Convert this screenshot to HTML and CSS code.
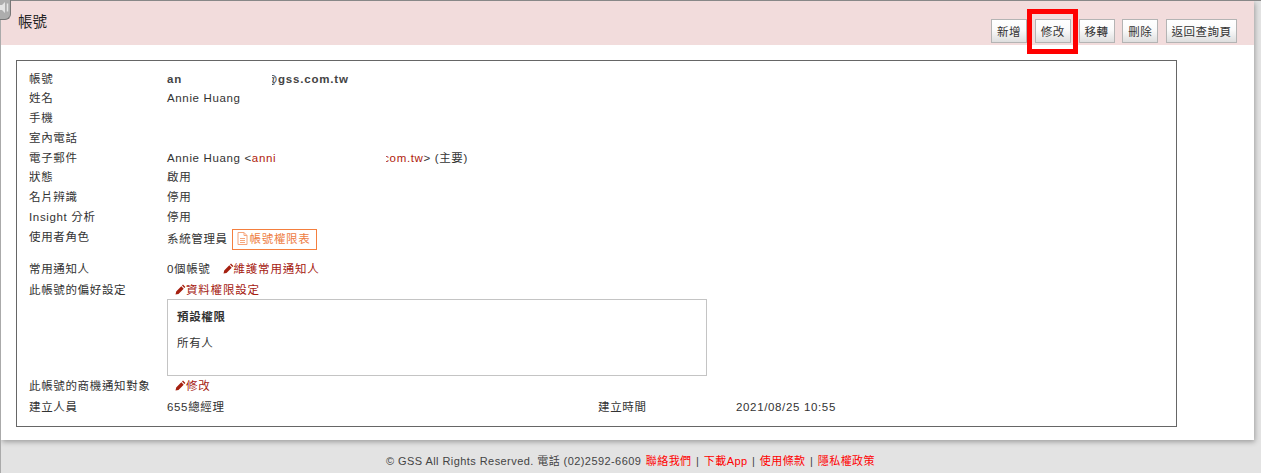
FILE: index.html
```html
<!DOCTYPE html>
<html>
  <head>
    <meta charset="utf-8">
    <title>帳號</title>
    <link rel="stylesheet" href="styles.css">
  </head>
  <body>
    <div class="handle">
      <svg width="10" height="12" viewBox="0 0 10 12"><path d="M0 3h2l3-3v11L2 8H0z" fill="#e4e4e4"/><path d="M7.5 1.5v8" stroke="#e4e4e4" stroke-width="1.5"/></svg>
    </div>
    <div class="panel">
      <div class="panel-head">
        <div class="panel-title">帳號</div>
        <div class="btn-container">
          <button>新增</button>
          <button>修改</button>
          <button>移轉</button>
          <button>刪除</button>
          <button>返回查詢頁</button>
        </div>
      </div>
      <div class="detail">
        <div class="row"><div class="label">帳號</div><div class="value strong">an<span class="mask mask-account"></span>@gss.com.tw</div></div>
        <div class="row"><div class="label">姓名</div><div class="value">Annie Huang</div></div>
        <div class="row"><div class="label">手機</div><div class="value"></div></div>
        <div class="row"><div class="label">室內電話</div><div class="value"></div></div>
        <div class="row"><div class="label">電子郵件</div><div class="value">Annie Huang &lt;<a class="mail">anni<span class="mask mask-mail"></span>com.tw</a>&gt; (主要)</div></div>
        <div class="row"><div class="label">狀態</div><div class="value">啟用</div></div>
        <div class="row"><div class="label">名片辨識</div><div class="value">停用</div></div>
        <div class="row"><div class="label">Insight 分析</div><div class="value">停用</div></div>
        <div class="row row-role">
          <div class="label">使用者角色</div>
          <div class="value">系統管理員
            <a class="perm-btn">
              <svg width="11" height="13" viewBox="0 0 11 13" fill="none" stroke="#f5a67c"><path d="M1 .5h6l3 3v9H1z"/><path d="M7 .5v3h3M3 6.5h5M3 8.5h5M3 10.5h5"/></svg>帳號權限表
            </a>
          </div>
        </div>
        <div class="row row-edit"><div class="label">常用通知人</div><div class="value">0個帳號<a class="edit edit-gap"><svg class="pencil" width="11" height="11" viewBox="0 0 11 11"><path d="M8 .6l2.4 2.4-1 1L7 1.6zM6.3 2.3l2.4 2.4-5.2 5.2-3 .7.7-3z" fill="#a52010"/></svg>維護常用通知人</a></div></div>
        <div class="row"><div class="label">此帳號的偏好設定</div><div class="value value-edit"><a class="edit"><svg class="pencil" width="11" height="11" viewBox="0 0 11 11"><path d="M8 .6l2.4 2.4-1 1L7 1.6zM6.3 2.3l2.4 2.4-5.2 5.2-3 .7.7-3z" fill="#a52010"/></svg>資料權限設定</a></div></div>
        <div class="pref-box">
          <div class="pref-title">預設權限</div>
          <div>所有人</div>
        </div>
        <div class="row"><div class="label">此帳號的商機通知對象</div><div class="value value-edit"><a class="edit"><svg class="pencil" width="11" height="11" viewBox="0 0 11 11"><path d="M8 .6l2.4 2.4-1 1L7 1.6zM6.3 2.3l2.4 2.4-5.2 5.2-3 .7.7-3z" fill="#a52010"/></svg>修改</a></div></div>
        <div class="row row-last">
          <div class="label">建立人員</div><div class="value half">655總經理</div>
          <div class="label">建立時間</div><div class="value">2021/08/25 10:55</div>
        </div>
      </div>
    </div>
    <div class="footer">© GSS All Rights Reserved. 電話 (02)2592-6609 <a>聯絡我們</a> | <a>下載App</a> | <a>使用條款</a> | <a>隱私權政策</a></div>
    <div class="red-mark"></div>
  </body>
</html>
```

FILE: styles.css
```css
body {
  font-family: "Liberation Sans", "Noto Sans CJK TC", sans-serif;
  font-size: 11.5px;
  letter-spacing: 0.65px;
  color: #333;
  background-color: #e3e3e3;
  margin: 0;
  height: 473px;
  overflow: hidden;
  border-top: 1px solid #888;
  box-sizing: border-box;
  border-left: 1px solid #aaa;
}

.handle {
  position: absolute;
  left: 0;
  top: 0;
  width: 11px;
  height: 20px;
  background-color: #adadad;
  border-right: 1px solid #777;
  border-bottom: 1px solid #777;
  border-bottom-right-radius: 6px;
  box-sizing: border-box;
  padding-top: 2px;
  overflow: hidden;
}

.panel {
  width: 1253px;
  height: 439px;
  background-color: #fff;
  box-shadow: 1px 2px 5px rgba(0, 0, 0, 0.3);
}

.panel-head {
  height: 44px;
  background-color: #f2dcdc;
  display: flex;
  justify-content: space-between;
  padding: 0 17px 0 17px;
  box-sizing: border-box;
}

.panel-title {
  font-size: 14.5px;
  letter-spacing: 0;
  color: #222;
  padding-top: 9px;
}

.btn-container {
  display: flex;
  gap: 7.75px;
  padding-top: 18px;
}

button {
  font-family: inherit;
  font-size: 11.5px;
  letter-spacing: 0.5px;
  color: #333;
  height: 24px;
  min-width: 36px;
  padding: 0 4.5px;
  border: 1px solid #b4b4b4;
  background: linear-gradient(#fff, #fafafa 45%, #dedede);
}

.detail {
  width: 1161px;
  height: 367px;
  margin: 15px 0 0 15px;
  border: 1px solid #666;
  box-sizing: border-box;
  padding: 8.5px 12px 0;
}

.row {
  display: flex;
  height: 19.8px;
  line-height: 19px;
}

.label {
  width: 138px;
  flex-shrink: 0;
}

.half {
  width: 431px;
  flex: none;
}

.row-role {
  height: 32px;
}

.row-role .value {
  line-height: 21px;
  padding-top: 1px;
}

.row-edit {
  height: 20.8px;
}

.row-last {
  margin-top: 1px;
}

.value-edit {
  padding-left: 8px;
}

.strong {
  font-weight: bold;
  letter-spacing: 0.8px;
  color: #444;
}

/* blanked part of the address, it sits over the next letter */
.mask {
  display: inline-block;
  position: relative;
  height: 14px;
  vertical-align: middle;
  background-color: #fff;
}

.mask-account {
  width: 90px;
  margin-right: -6px;
}

.mask-mail {
  width: 110px;
  margin-right: -3px;
}

.mail {
  color: #b01c0c;
}

.perm-btn {
  display: inline-block;
  border: 1px solid #f47f3e;
  color: #ee7d43;
  height: 21px;
  line-height: 19px;
  padding: 0 6px 0 4px;
  box-sizing: border-box;
  vertical-align: middle;
}

.perm-btn svg {
  vertical-align: -2px;
  margin-right: 2px;
}

.edit {
  color: #a52010;
  letter-spacing: 0.8px;
}

.edit-gap {
  margin-left: 12px;
}

.pencil {
  vertical-align: -1px;
}

.pref-box {
  width: 540px;
  height: 77px;
  margin: -1px 0 1px 138px;
  border: 1px solid #c4c4c4;
  box-sizing: border-box;
  padding: 8px 9px;
  line-height: 19px;
}

.pref-title {
  font-weight: bold;
  margin-bottom: 7px;
}

.footer {
  text-align: center;
  padding-top: 12px;
  font-size: 11px;
  letter-spacing: 0.43px;
  color: #444;
}

.footer a {
  color: #f00;
  margin: 0 1px;
}

.red-mark {
  position: absolute;
  left: 1027px;
  top: 9px;
  width: 51px;
  height: 45px;
  border: 5px solid #f00;
  box-sizing: border-box;
}
```
